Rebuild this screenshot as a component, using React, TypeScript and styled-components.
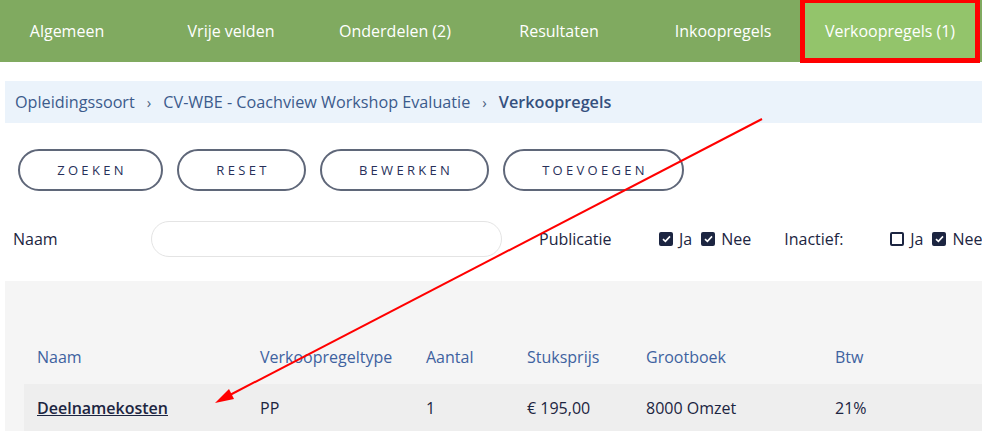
import styled, { createGlobalStyle } from "styled-components";

const GlobalStyle = createGlobalStyle`
  * {
    box-sizing: border-box;
  }
  body {
    margin: 0;
    background: #ffffff;
    font-family: "Open Sans", "Liberation Sans", sans-serif;
  }
`;

const Page = styled.div`
  position: relative;
  width: 982px;
  height: 431px;
  overflow: hidden;
  background: #ffffff;
`;

const TabBar = styled.nav`
  display: flex;
  height: 62px;
  margin-left: -15px;
  background-color: #80aa60;
`;

interface ITab {
  active?: boolean;
}

const Tab = styled.div<ITab>`
  position: relative;
  flex: 0 0 ${(props) => (props.active ? "170px" : "164px")};
  display: flex;
  align-items: center;
  justify-content: center;
  color: #ffffff;
  font-size: 16px;
  background-color: ${(props) => (props.active ? "#93c46b" : "transparent")};
  ${(props) =>
    props.active &&
    `
    &::after {
      content: "";
      position: absolute;
      top: -2px;
      left: -5px;
      right: -5px;
      bottom: -1px;
      border: 5px solid #ff0000;
    }
  `}
`;

const Breadcrumb = styled.div`
  display: flex;
  align-items: center;
  height: 42px;
  margin: 19px 0 0 5px;
  padding-left: 10px;
  background-color: #ebf3fb;
  color: #3c5b8c;
  font-size: 16.2px;
`;

const Crumb = styled.span<ITab>`
  font-weight: ${(props) => (props.active ? 600 : 400)};
  color: ${(props) => (props.active ? "#35507e" : "#3c5b8c")};
`;

const Sep = styled.span`
  margin: 0 12px 0 12px;
  font-size: 15px;
  color: #4a5f80;
`;

const Buttons = styled.div`
  display: flex;
  gap: 14px;
  margin: 26px 0 0 18px;
`;

const PillButton = styled.button<{ w: number }>`
  flex: 0 0 ${(props) => props.w}px;
  height: 42px;
  border: 2px solid #5f6779;
  border-radius: 21px;
  background: #ffffff;
  color: #27305a;
  font-family: "Open Sans", "Liberation Sans", sans-serif;
  font-size: 13px;
  letter-spacing: 3.3px;
  padding: 0 0 0 3px;
  cursor: pointer;
`;

const FilterRow = styled.div`
  display: flex;
  align-items: center;
  height: 36px;
  margin-top: 30px;
  color: #1c2541;
  font-size: 16px;
  white-space: nowrap;
  & > * {
    flex-shrink: 0;
  }
`;

const Label = styled.span<{ w: number }>`
  flex: 0 0 ${(props) => props.w}px;
`;

const SearchInput = styled.input`
  width: 351px;
  height: 36px;
  margin-right: 37px;
  border: 1px solid #e4e4e4;
  border-radius: 18px;
  outline: none;
`;

const Check = styled.label`
  display: flex;
  align-items: center;
  gap: 6px;
  margin-right: 9px;
`;

const Box = styled.span<{ checked: boolean }>`
  width: 14px;
  height: 14px;
  border-radius: 2px;
  display: flex;
  align-items: center;
  justify-content: center;
  background-color: ${(props) => (props.checked ? "#1c2541" : "#ffffff")};
  border: 2px solid #1c2541;
`;

const Gap = styled.span<{ w: number }>`
  flex: 0 0 ${(props) => props.w}px;
`;

const Results = styled.section`
  margin: 24px 0 0 5px;
  height: 200px;
  padding: 64px 0 0 19px;
  background-color: #f5f5f5;
`;

const Row = styled.div<{ body?: boolean }>`
  display: grid;
  grid-template-columns: 223px 166px 101px 119px 189px 1fr;
  align-items: center;
  padding: ${(props) => (props.body ? "12px 0 12px 13px" : "0 0 15px 13px")};
  background-color: ${(props) => (props.body ? "#eeeeee" : "transparent")};
  color: ${(props) => (props.body ? "#1c2541" : "#3e62a0")};
  font-size: 16px;
  line-height: 24px;
`;

const NameLink = styled.a`
  color: #1c2541;
  font-weight: 600;
  text-decoration: underline;
`;

const Annotation = styled.svg`
  position: absolute;
  left: 0;
  top: 0;
  pointer-events: none;
`;

const CheckBox = ({ checked, label }: { checked: boolean; label: string }) => (
  <Check>
    <Box checked={checked}>
      {checked && (
        <svg width="9" height="8" viewBox="0 0 9 8">
          <path d="M1 4.2 L3.4 6.4 L8 1.4" stroke="#ffffff" strokeWidth="1.6" fill="none" />
        </svg>
      )}
    </Box>
    {label}
  </Check>
);

const tabs = ["Algemeen", "Vrije velden", "Onderdelen (2)", "Resultaten", "Inkoopregels"];

const App = () => {
  return (
    <Page>
      <GlobalStyle />
      <TabBar>
        {tabs.map((t) => (
          <Tab key={t}>{t}</Tab>
        ))}
        <Tab active>Verkoopregels (1)</Tab>
      </TabBar>
      <Breadcrumb>
        <Crumb>Opleidingssoort</Crumb>
        <Sep>›</Sep>
        <Crumb>CV-WBE - Coachview Workshop Evaluatie</Crumb>
        <Sep>›</Sep>
        <Crumb active>Verkoopregels</Crumb>
      </Breadcrumb>
      <Buttons>
        <PillButton w={145}>ZOEKEN</PillButton>
        <PillButton w={129}>RESET</PillButton>
        <PillButton w={169}>BEWERKEN</PillButton>
        <PillButton w={181}>TOEVOEGEN</PillButton>
      </Buttons>
      <FilterRow>
        <Gap w={13} />
        <Label w={138}>Naam</Label>
        <SearchInput />
        <Label w={120}>Publicatie</Label>
        <CheckBox checked label="Ja" />
        <CheckBox checked label="Nee" />
        <Gap w={24} />
        <Label w={106}>Inactief:</Label>
        <CheckBox checked={false} label="Ja" />
        <CheckBox checked label="Nee" />
      </FilterRow>
      <Results>
        <Row>
          <span>Naam</span>
          <span>Verkoopregeltype</span>
          <span>Aantal</span>
          <span>Stuksprijs</span>
          <span>Grootboek</span>
          <span>Btw</span>
        </Row>
        <Row body>
          <span>
            <NameLink>Deelnamekosten</NameLink>
          </span>
          <span>PP</span>
          <span>1</span>
          <span>€ 195,00</span>
          <span>8000 Omzet</span>
          <span>21%</span>
        </Row>
      </Results>
      <Annotation width="982" height="431">
        <line x1="762" y1="119" x2="228" y2="396" stroke="#ff0000" strokeWidth="2" />
        <polygon points="215,403 229,389 234,399" fill="#ff0000" />
      </Annotation>
    </Page>
  );
};

export default App;
